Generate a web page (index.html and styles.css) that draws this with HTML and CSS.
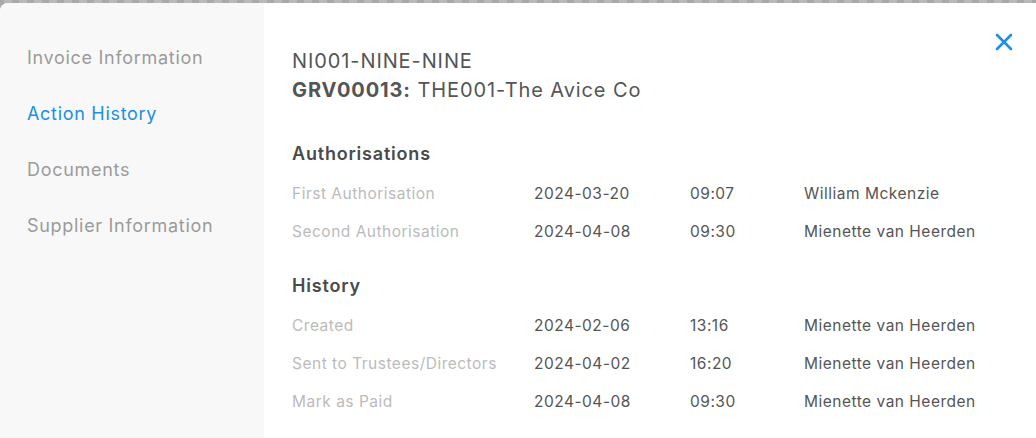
FILE: index.html
```html
<!DOCTYPE html>
<html>
<head>
<meta charset="utf-8">
<link rel="stylesheet" href="styles.css">
</head>
<body>
<div class="strip"></div>
<div class="modal">
  <nav class="sidebar">
    <div class="nav-item">Invoice Information</div>
    <div class="nav-item active">Action History</div>
    <div class="nav-item">Documents</div>
    <div class="nav-item">Supplier Information</div>
  </nav>
  <main class="content">
    <button class="close" aria-label="Close">
      <svg width="20" height="20" viewBox="0 0 20 20"><path d="M3 3 L17 17 M17 3 L3 17" stroke="#1a8fe3" stroke-width="2.6" stroke-linecap="round" fill="none"/></svg>
    </button>
    <div class="title">NI001-NINE-NINE</div>
    <div class="title"><b>GRV00013:</b> THE001-The Avice Co</div>

    <h2 class="section first">Authorisations</h2>
    <div class="row"><span class="label">First Authorisation</span><span>2024-03-20</span><span>09:07</span><span>William Mckenzie</span></div>
    <div class="row"><span class="label">Second Authorisation</span><span>2024-04-08</span><span>09:30</span><span>Mienette van Heerden</span></div>

    <h2 class="section">History</h2>
    <div class="row"><span class="label">Created</span><span>2024-02-06</span><span>13:16</span><span>Mienette van Heerden</span></div>
    <div class="row"><span class="label">Sent to Trustees/Directors</span><span>2024-04-02</span><span>16:20</span><span>Mienette van Heerden</span></div>
    <div class="row"><span class="label">Mark as Paid</span><span>2024-04-08</span><span>09:30</span><span>Mienette van Heerden</span></div>
  </main>
</div>
</body>
</html>
```

FILE: styles.css
```css
* { box-sizing: border-box; }
html, body { margin: 0; padding: 0; }
body {
  width: 1036px;
  height: 438px;
  overflow: hidden;
  background: #a9a9a9;
  font-family: Inter, "Open Sans", "Liberation Sans", sans-serif;
}
.strip {
  height: 3px;
  background: repeating-linear-gradient(90deg, #a9a9a9 0 4px, #b9b9b9 4px 12px, #a9a9a9 12px 15px);
}
.modal {
  display: flex;
  height: 435px;
  background: #fff;
  border-top-left-radius: 8px;
  overflow: hidden;
}
.sidebar {
  width: 264px;
  flex: none;
  background: #f8f8f8;
  padding: 41px 0 0 27px;
  display: flex;
  flex-direction: column;
}
.nav-item {
  height: 56px;
  line-height: 28px;
  font-size: 18px;
  letter-spacing: 0.7px;
  color: #9b9b9b;
}
.nav-item.active { color: #1a8fe3; }
.content {
  position: relative;
  flex: 1;
  padding: 43px 0 0 28px;
}
.close {
  position: absolute;
  top: 27px;
  right: 20px;
  width: 24px;
  height: 24px;
  padding: 2px;
  border: 0;
  background: none;
}
.title {
  font-size: 20px;
  line-height: 30px;
  letter-spacing: 0.9px;
  color: #555;
}
.title:nth-child(3) { line-height: 29px; }
.title b { font-weight: 700; color: #555; }
.section {
  margin: 0;
  font-size: 18px;
  font-weight: 600;
  letter-spacing: 0.8px;
  color: #4a4a4a;
  line-height: 24px;
  margin-top: 15px;
  margin-bottom: 17px;
}
.section.first { margin-top: 37px; margin-bottom: 17px; }
.row {
  display: grid;
  grid-template-columns: 242px 156px 114px auto;
  height: 38px;
  line-height: 22px;
  font-size: 15.5px;
  letter-spacing: 0.5px;
  color: #555;
}
.row:last-child { height: 37px; }
.label { color: #bbb; }
```
